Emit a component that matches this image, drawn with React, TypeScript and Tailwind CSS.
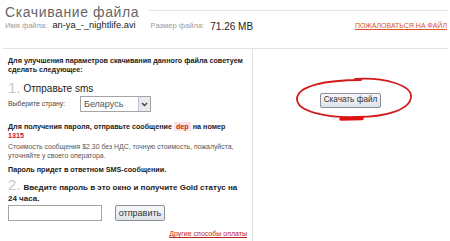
import React from "react";

export default function App() {
  return (
    <div className="w-[450px] h-[241px] bg-white overflow-hidden font-['Liberation_Sans',sans-serif] text-[#333]">
      {/* Title */}
      <div className="flex items-center pl-[5px] pr-[2px] h-[20px] pt-[3px]">
        <h1 className="text-[14px] leading-none text-[#666] tracking-[0.6px]">Скачивание файла</h1>
        <div className="flex-1 h-px bg-[#e4e4e4] ml-[10px] mt-[-2px]" />
      </div>
      {/* File info */}
      <div className="flex items-center pl-[5px] pr-[3px] h-[12px]">
        <span className="text-[7.6px] text-[#9a9a9a]">Имя файла:</span>
        <span className="text-[9.3px] text-[#222] ml-[5px]">an-ya_-_nightlife.avi</span>
        <span className="text-[7.6px] text-[#9a9a9a] ml-[15px]">Размер файла:</span>
        <span className="text-[10px] text-[#222] ml-[6px]">71.26 MB</span>
        <a className="ml-auto text-[7px] text-[#d4532b] underline">ПОЖАЛОВАТЬСЯ НА ФАЙЛ</a>
      </div>
      <div className="h-[16px]" />
      <div className="flex border-t border-[#e2e2e2] ml-[3px] mr-[2px] h-[193px]">
        {/* Left column */}
        <div className="w-[250px] border-r border-[#e2e2e2] pl-[5px] pr-[4px] pt-[6.5px]">
          <p className="text-[7.2px] font-bold leading-[9px] text-[#222]">
            Для улучшения параметров скачивания данного файла советуем сделать следующее:
          </p>
          <div className="flex items-center h-[15px] mt-[6.5px]">
            <span className="text-[15px] text-[#c8c8c8] leading-none">1.</span>
            <span className="text-[10px] text-[#222] ml-[3px] mt-[1px]">Отправьте sms</span>
          </div>
          <div className="flex items-center mt-[1px]">
            <span className="text-[6.9px] text-[#444] w-[72px]">Выберите страну:</span>
            <div className="flex items-center w-[71px] h-[16px] border border-[#a5a5a5] bg-white">
              <span className="flex-1 text-[9px] text-[#555] pl-[3px] leading-none">Беларусь</span>
              <div className="w-[12px] h-[14px] bg-[#e8eaf0] border-l border-[#c0c4cc] flex items-center justify-center">
                <svg width="7" height="5" viewBox="0 0 7 5"><path d="M1 1 L3.5 3.5 L6 1" stroke="#444" strokeWidth="1.4" fill="none" /></svg>
              </div>
            </div>
          </div>
          <p className="text-[7.2px] font-bold leading-[9px] text-[#222] mt-[10px]">
            Для получения пароля, отправьте сообщение <span className="text-[#d01818] bg-[#fbe3e3] px-[2px]">dep</span> на номер
            <br />
            <span className="text-[#d01818]">1315</span>
          </p>
          <p className="text-[6.9px] leading-[9px] text-[#555] mt-[2px]">
            Стоимость сообщения $2.30 без НДС, точную стоимость, пожалуйста, уточняйте у своего оператора.
          </p>
          <p className="text-[7.2px] font-bold leading-[9px] text-[#222] mt-[5px]">
            Пароль придет в ответном SMS-сообщении.
          </p>
          <p className="text-[8px] font-bold leading-[11px] text-[#222] mt-[5px]">
            <span className="text-[15px] font-normal text-[#c8c8c8] leading-[11px] mr-[3px]">2.</span>Введите пароль в это окно и получите Gold статус на 24 часа.
          </p>
          <div className="flex items-center mt-[1px]">
            <div className="w-[94px] h-[16px] border border-[#a5a5a5] bg-white" />
            <button className="ml-[13px] h-[16px] w-[50px] text-[9px] text-[#333] border border-[#8a9099] rounded-[2px] bg-gradient-to-b from-[#f7f8fa] to-[#dfe3e9] leading-none">
              отправить
            </button>
          </div>
          <div className="flex justify-end mt-[8px] pr-[1px]">
            <a className="text-[7px] leading-[9px] text-[#c0231b] underline">Другие способы оплаты</a>
          </div>
        </div>
        {/* Right column */}
        <div className="flex-1 relative flex justify-center items-start pt-[44px]">
          <button className="h-[15px] w-[61px] text-[8.2px] text-[#333] border border-[#8a9099] rounded-[2px] bg-gradient-to-b from-[#f7f8fa] to-[#dde2e9] leading-none">
            Скачать файл
          </button>
          <svg className="absolute left-[42px] top-[28px]" width="122" height="46" viewBox="0 0 122 46">
            <path
              d="M60 2 C 89 0, 117 8, 116 20 C 115 33, 90 40, 62 40 C 29 41, 2 34, 2 22 C 2 9, 30 3, 66 3"
              fill="none"
              stroke="#d11a1a"
              strokeWidth="1.8"
              strokeLinecap="round"
            />
            <path d="M46 42 L 67 41.5" stroke="#e11010" strokeWidth="3.5" strokeLinecap="round" />
          </svg>
        </div>
      </div>
    </div>
  );
}
